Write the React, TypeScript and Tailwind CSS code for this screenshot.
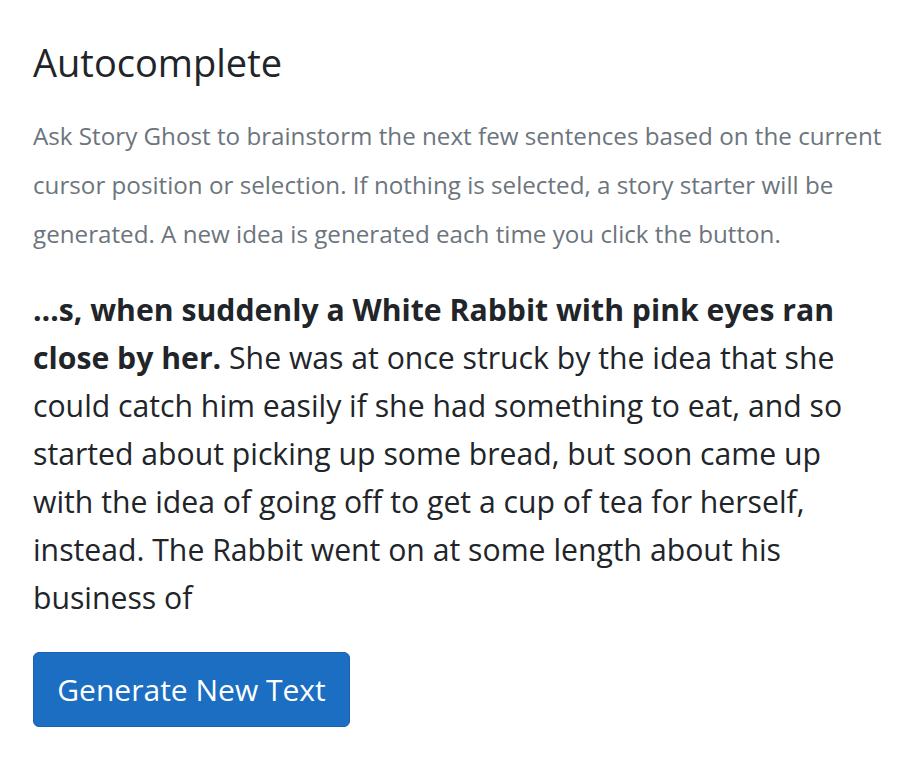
export default function App() {
  return (
    <div
      className="min-h-screen bg-white px-[33px] pt-[40px]"
      style={{ fontFamily: '"Open Sans", "Noto Sans", sans-serif' }}
    >
      <h3 className="text-[38px] leading-[44px] font-normal text-[#212529]">Autocomplete</h3>
      <p className="mt-[27px] w-[870px] text-[24.2px] leading-[49px] text-[#6c757d]">
        Ask Story Ghost to brainstorm the next few sentences based on the current cursor position or
        selection. If nothing is selected, a story starter will be generated. A new idea is generated each
        time you click the button.
      </p>
      <p className="mt-[28px] w-[850px] text-[30.2px] leading-[48px] text-[#212529]">
        <strong className="font-bold">…s, when suddenly a White Rabbit with pink eyes ran close by her.</strong>{" "}
        She was at once struck by the idea that she could catch him easily if she had something to eat, and so
        started about picking up some bread, but soon came up with the idea of going off to get a cup of tea
        for herself, instead. The Rabbit went on at some length about his business of
      </p>
      <button className="mt-[30px] h-[75px] w-[317px] rounded-[6px] border border-[#1861ac] bg-[#1b6ec2] text-[30px] text-white">
        Generate New Text
      </button>
    </div>
  );
}
